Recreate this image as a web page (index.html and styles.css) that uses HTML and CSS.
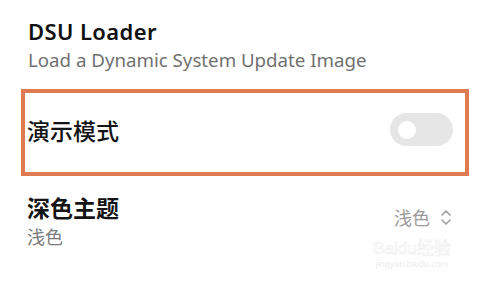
FILE: index.html
```html
<!DOCTYPE html>
<html lang="zh-CN">
<head>
<meta charset="utf-8">
<link rel="stylesheet" href="styles.css">
</head>
<body>
<div class="page">
  <div class="item item-dsu">
    <div class="title latin">DSU Loader</div>
    <div class="subtitle latin">Load a Dynamic System Update Image</div>
  </div>

  <div class="row-highlight">
    <div class="row-label">演示模式</div>
    <div class="switch"><div class="knob"></div></div>
  </div>

  <div class="item item-theme">
    <div class="theme-text">
      <div class="cjk-title">深色主题</div>
      <div class="cjk-sub">浅色</div>
    </div>
    <div class="theme-value">
      <span>浅色</span>
      <svg class="chev" width="12" height="17" viewBox="0 0 12 17">
        <path d="M2 6 L6 2 L10 6" fill="none" stroke="#a0a0a0" stroke-width="1.6" stroke-linecap="round" stroke-linejoin="round"/>
        <path d="M2 11 L6 15 L10 11" fill="none" stroke="#a0a0a0" stroke-width="1.6" stroke-linecap="round" stroke-linejoin="round"/>
      </svg>
    </div>
  </div>

  <div class="watermark">
    <div class="wm-logo">Bai<span class="wm-paw">du</span>经验</div>
    <div class="wm-url">jingyan.baidu.com</div>
  </div>
</div>
</body>
</html>
```

FILE: styles.css
```css
html, body {
  margin: 0;
  padding: 0;
  background: #ffffff;
}

.page {
  position: relative;
  width: 481px;
  height: 282px;
  overflow: hidden;
  font-family: "Noto Sans", "Noto Sans CJK SC", sans-serif;
}

.item-dsu {
  padding: 17px 0 0 28px;
}

.title {
  font-size: 22px;
  line-height: 28px;
  font-weight: 600;
  letter-spacing: 0.4px;
  color: #111111;
}

.subtitle {
  margin-top: 3px;
  font-size: 18.7px;
  line-height: 24px;
  color: #707070;
}

.row-highlight {
  margin: 17px 0 0 21px;
  width: 426px;
  height: 73px;
  border: 4px solid #e07a52;
  display: flex;
  align-items: center;
  justify-content: space-between;
  padding: 0 12px 6px 2px;
  box-sizing: content-box;
}

.row-label {
  font-family: "Noto Sans CJK SC", sans-serif;
  font-size: 23px;
  line-height: 24px;
  font-weight: 500;
  color: #141414;
}

.switch {
  width: 63px;
  height: 33px;
  border-radius: 17px;
  background: #e6e6e6;
  display: flex;
  align-items: center;
  padding-left: 8px;
  box-sizing: border-box;
}

.knob {
  width: 18px;
  height: 18px;
  border-radius: 50%;
  background: #ffffff;
}

.item-theme {
  display: flex;
  justify-content: space-between;
  align-items: flex-start;
  padding: 19px 29px 0 27px;
}

.cjk-title {
  font-family: "Noto Sans CJK SC", sans-serif;
  font-size: 23px;
  line-height: 24px;
  font-weight: 700;
  color: #141414;
}

.cjk-sub {
  margin-top: 7px;
  font-family: "Noto Sans CJK SC", sans-serif;
  font-size: 18px;
  line-height: 20px;
  color: #7a7a7a;
}

.theme-value {
  margin-top: 12px;
  display: flex;
  align-items: center;
  gap: 10px;
  font-family: "Noto Sans CJK SC", sans-serif;
  font-size: 18px;
  line-height: 20px;
  color: #9a9a9a;
}

.watermark {
  position: absolute;
  left: 362px;
  top: 240px;
  width: 100px;
  text-align: center;
  font-family: "Liberation Sans", "Noto Sans CJK SC", sans-serif;
}

.wm-logo {
  font-size: 17px;
  line-height: 18px;
  font-weight: 400;
  -webkit-text-stroke: 0.5px #ececec;
  color: #ffffff;
}

.wm-url {
  font-size: 9px;
  line-height: 12px;
  color: #ececec;
}
```
